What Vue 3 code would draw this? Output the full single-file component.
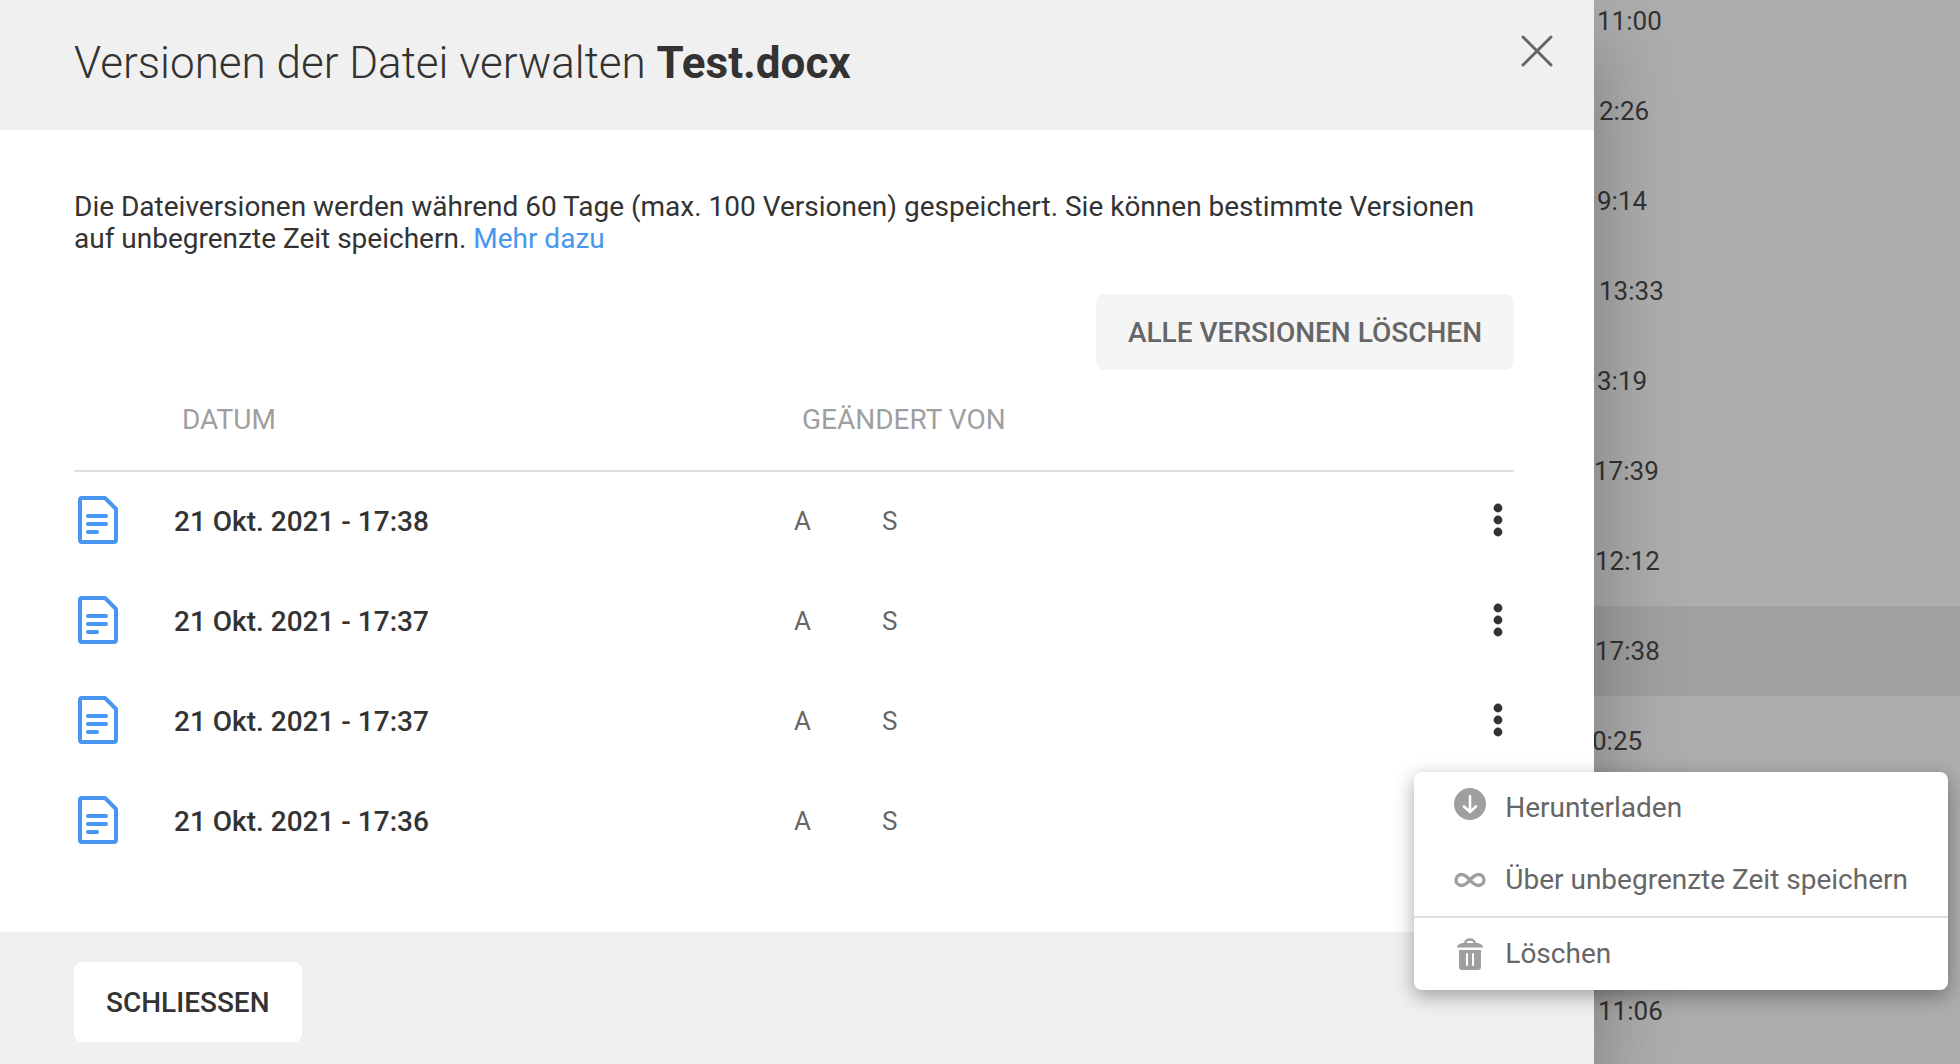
<script setup>
const versions = [
  { id: 1, date: '21 Okt. 2021 - 17:38', first: 'A', last: 'S' },
  { id: 2, date: '21 Okt. 2021 - 17:37', first: 'A', last: 'S' },
  { id: 3, date: '21 Okt. 2021 - 17:37', first: 'A', last: 'S' },
  { id: 4, date: '21 Okt. 2021 - 17:36', first: 'A', last: 'S' },
]

// shift: where the visible part of the time starts, relative to the drawer edge
const files = [
  { time: '11:00', shift: 3 },
  { time: '2:26', shift: 5 },
  { time: '9:14', shift: 3 },
  { time: '13:33', shift: 5 },
  { time: '3:19', shift: 3 },
  { time: '17:39', shift: 0 },
  { time: '12:12', shift: 1 },
  { time: '17:38', shift: 1, selected: true },
  { time: '0:25', shift: -2 },
  { time: '', shift: 0 },
  { time: '', shift: 0 },
  { time: '11:06', shift: 4 },
]
</script>

<template>
  <div class="page">
    <main class="drawer" role="dialog" aria-labelledby="drawer-title">
      <header class="drawer-header">
        <h1 id="drawer-title">Versionen der Datei verwalten <strong>Test.docx</strong></h1>
        <button class="close" type="button" aria-label="Schliessen">
          <svg width="34" height="34" viewBox="0 0 34 34" fill="none" stroke="#666" stroke-width="3" stroke-linecap="round">
            <path d="M3 3 31 31M31 3 3 31" />
          </svg>
        </button>
      </header>

      <section class="content">
        <p class="intro">
          Die Dateiversionen werden während 60 Tage (max. 100 Versionen) gespeichert. Sie können bestimmte Versionen auf unbegrenzte Zeit speichern.
          <a href="#">Mehr dazu</a>
        </p>
        <button class="delete-all" type="button">ALLE VERSIONEN LÖSCHEN</button>

        <table class="versions">
          <thead>
            <tr>
              <th class="col-icon"></th>
              <th class="col-date">DATUM</th>
              <th>GEÄNDERT VON</th>
              <th class="col-more"></th>
            </tr>
          </thead>
          <tbody>
            <tr v-for="v in versions" :key="v.id">
              <td class="file">
                <svg width="40" height="48" viewBox="0 0 40 48" fill="none" stroke="#4896f0" stroke-width="4" stroke-linejoin="round" stroke-linecap="round">
                  <path d="M4 2H27L38 13V44Q38 46 36 46H4Q2 46 2 44V4Q2 2 4 2Z" />
                  <path d="M10 20H28M10 28H28M10 36H19" />
                </svg>
              </td>
              <td class="date">{{ v.date }}</td>
              <td class="author"><span>{{ v.first }}</span><span>{{ v.last }}</span></td>
              <td class="more">
                <button type="button" aria-label="Mehr">
                  <svg width="12" height="36" viewBox="0 0 12 36" fill="#333">
                    <circle cx="6" cy="6" r="4.4" />
                    <circle cx="6" cy="18" r="4.4" />
                    <circle cx="6" cy="30" r="4.4" />
                  </svg>
                </button>
              </td>
            </tr>
          </tbody>
        </table>
      </section>

      <footer class="drawer-footer">
        <button type="button">SCHLIESSEN</button>
      </footer>
    </main>

    <aside class="files">
      <div v-for="(f, i) in files" :key="i" class="file-row" :class="{ selected: f.selected }">
        <span :style="{ marginLeft: f.shift + 'px' }">{{ f.time }}</span>
      </div>
    </aside>

    <div class="menu" role="menu">
      <button type="button" role="menuitem">
        <svg class="download" width="32" height="32" viewBox="0 0 32 32">
          <circle cx="16" cy="16" r="16" fill="#9f9f9f" />
          <path d="M16 8V23M10 18.500 16 24 22 18.500" fill="none" stroke="#fff" stroke-width="2.600" stroke-linecap="round" stroke-linejoin="round" />
        </svg>
        Herunterladen
      </button>
      <button type="button" role="menuitem">
        <svg width="32" height="32" viewBox="0 0 32 32" fill="none" stroke="#9f9f9f" stroke-width="3.400">
          <path d="M16 16C13 12.500 11 10.500 7.500 10.500A5.500 5.500 0 0 0 7.500 21.500C11 21.500 13 19.500 16 16C19 12.500 21 10.500 24.500 10.500A5.500 5.500 0 0 1 24.500 21.500C21 21.500 19 19.500 16 16Z" />
        </svg>
        Über unbegrenzte Zeit speichern
      </button>
      <hr />
      <button type="button" role="menuitem">
        <svg width="32" height="32" viewBox="0 0 32 32">
          <path d="M11 6C11 0 21 0 21 6" fill="none" stroke="#9f9f9f" stroke-width="2.500" />
          <path d="M3 9.500C3 7 6 5 10 5H22C26 5 29 7 29 9.500Z" fill="#9f9f9f" />
          <path d="M5 12H27V29Q27 32 24 32H8Q5 32 5 29Z" fill="#9f9f9f" />
          <path d="M13 16V27M19 16V27" stroke="#fff" stroke-width="2" stroke-linecap="round" />
        </svg>
        Löschen
      </button>
    </div>
  </div>
</template>

<style>
body {
  margin: 0;
}
</style>

<style scoped>
.page {
  position: relative;
  display: flex;
  height: 100vh;
  overflow: hidden;
  background: #adadad;
  color: #333;
  font-family: Roboto, "Liberation Sans", sans-serif;
  font-size: 28px;
  line-height: 32px;
}

button {
  border: 0;
  padding: 0;
  background: none;
  color: inherit;
  font: inherit;
  cursor: pointer;
}

svg {
  display: block;
  flex: none;
}

.drawer {
  position: relative;
  z-index: 1;
  flex: 1;
  min-width: 0;
  display: flex;
  flex-direction: column;
  background: #fff;
  box-shadow: 0 40px 80px rgba(0, 0, 0, 0.3);
}

.drawer-header {
  display: flex;
  flex: none;
  justify-content: space-between;
  align-items: flex-start;
  box-sizing: border-box;
  height: 130px;
  padding: 34px 40px 0 74px;
  background: #f0f0f0;
}

h1 {
  margin: 0;
  font-size: 44px;
  font-weight: 300;
  line-height: 58px;
}

h1 strong {
  font-weight: 700;
}

.content {
  display: flex;
  flex: none;
  flex-direction: column;
  padding: 61px 80px 60px 74px;
}

.intro {
  margin: 0 0 39px;
}

.intro a {
  color: #4896f0;
  text-decoration: none;
}

.delete-all {
  align-self: flex-end;
  height: 76px;
  padding: 2px 32px 0;
  border-radius: 8px;
  background: #f5f5f5;
  color: #666;
  font-weight: 500;
}

.versions {
  width: 100%;
  border-collapse: separate;
  border-spacing: 0;
  table-layout: fixed;
}

th {
  height: 102px;
  padding: 0 0 0 8px;
  box-sizing: border-box;
  border-bottom: 2px solid #e0e0e0;
  color: #9f9f9f;
  font-weight: 400;
  text-align: left;
}

.col-icon {
  width: 100px;
}

.col-date {
  width: 620px;
}

.col-more {
  width: 26px;
}

td {
  height: 100px;
  padding: 0;
  box-sizing: border-box;
}

.file,
.more {
  padding: 0 0 4px 4px;
}

.more button {
  display: block;
}

.date {
  font-weight: 500;
}

.author {
  padding-bottom: 2px;
  color: #666;
  font-size: 26px;
}

.author span {
  display: inline-block;
  min-width: 88px;
}

.drawer-footer {
  flex: 1 0 auto;
  padding: 30px 74px;
  background: #f0f0f0;
}

.drawer-footer button {
  height: 80px;
  padding: 2px 32px 0;
  border-radius: 8px;
  background: #fff;
  font-weight: 500;
}

.files {
  width: 366px;
  margin-top: -24px;
  font-size: 26px;
}

.file-row {
  display: flex;
  align-items: center;
  height: 90px;
}

.selected {
  background: #a0a0a0;
}

.menu {
  position: absolute;
  z-index: 2;
  top: 772px;
  right: 12px;
  border-radius: 8px;
  background: #fff;
  box-shadow: 0 6px 20px rgba(0, 0, 0, 0.35);
  color: #666;
}

.menu button {
  display: flex;
  align-items: center;
  gap: 19px;
  width: 100%;
  height: 72px;
  padding: 0 40px;
}

.menu .download {
  margin-bottom: 8px;
}

.menu hr {
  height: 2px;
  margin: 0;
  border: 0;
  background: #e0e0e0;
}
</style>
